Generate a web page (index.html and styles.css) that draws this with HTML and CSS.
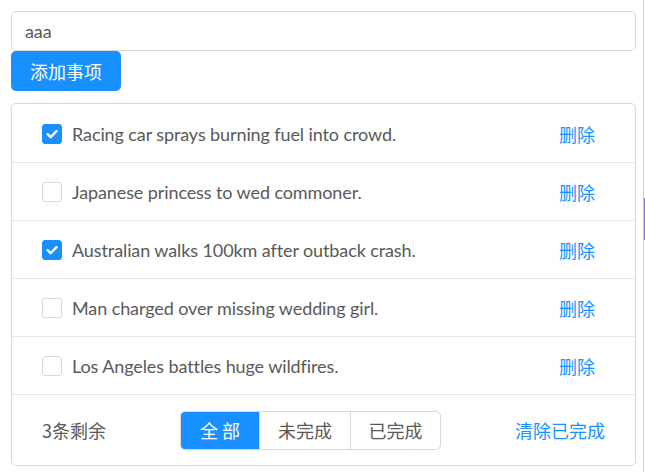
FILE: index.html
```html
<!DOCTYPE html>
<html lang="zh">
<head>
<meta charset="utf-8">
<title>Todo</title>
<link rel="stylesheet" href="styles.css">
</head>
<body>
<div class="page">
  <main class="app">
    <div class="input-box">aaa</div>
    <button class="add-btn">添加事项</button>
    <ul class="list">
      <li class="item">
        <span class="check checked"><svg viewBox="0 0 20 20" width="20" height="20"><path d="M5.5 10.2 L8.6 13.2 L14.6 7.2" fill="none" stroke="#fff" stroke-width="2.4" stroke-linecap="round" stroke-linejoin="round"/></svg></span>
        <span class="title">Racing car sprays burning fuel into crowd.</span>
        <span class="del">删除</span>
      </li>
      <li class="item">
        <span class="check"></span>
        <span class="title">Japanese princess to wed commoner.</span>
        <span class="del">删除</span>
      </li>
      <li class="item">
        <span class="check checked"><svg viewBox="0 0 20 20" width="20" height="20"><path d="M5.5 10.2 L8.6 13.2 L14.6 7.2" fill="none" stroke="#fff" stroke-width="2.4" stroke-linecap="round" stroke-linejoin="round"/></svg></span>
        <span class="title">Australian walks 100km after outback crash.</span>
        <span class="del">删除</span>
      </li>
      <li class="item">
        <span class="check"></span>
        <span class="title">Man charged over missing wedding girl.</span>
        <span class="del">删除</span>
      </li>
      <li class="item">
        <span class="check"></span>
        <span class="title">Los Angeles battles huge wildfires.</span>
        <span class="del">删除</span>
      </li>
      <li class="footer">
        <span class="count">3条剩余</span>
        <div class="seg">
          <span class="seg-btn seg-all active">全 部</span>
          <span class="seg-btn seg-mid">未完成</span>
          <span class="seg-btn seg-last">已完成</span>
        </div>
        <span class="clear">清除已完成</span>
      </li>
    </ul>
  </main>
  <div class="edge"><span class="edge-mark"></span></div>
</div>
</body>
</html>
```
FILE: styles.css
```css
* { box-sizing: border-box; }
html, body { margin: 0; padding: 0; background: #fff; }
body {
  font-family: Lato, "Noto Sans CJK SC", sans-serif;
  font-size: 18px;
  color: #595959;
}
.page {
  display: flex;
  width: 645px;
  height: 472px;
  overflow: hidden;
}
.app {
  width: 643px;
  padding: 11px 7px 0 11px;
}
.input-box {
  height: 40px;
  border: 1px solid #d9d9d9;
  border-radius: 5px;
  padding: 0 13px;
  display: flex;
  align-items: center;
  color: #595959;
  letter-spacing: -0.1px;
}
.add-btn {
  display: block;
  height: 40px;
  padding: 0 19px;
  border: 0;
  border-radius: 5px;
  background: #1890ff;
  color: #fff;
  font-family: "Noto Sans CJK SC", sans-serif;
  font-size: 18px;
}
.list {
  list-style: none;
  margin: 12px 0 0;
  padding: 1px 0 0;
  border: 1px solid #d9d9d9;
  border-radius: 5px;
}
.item {
  height: 58px;
  display: flex;
  align-items: center;
  padding: 0 40px 0 30px;
  border-bottom: 1px solid #e8e8e8;
}
.check {
  width: 20px;
  height: 20px;
  border: 1px solid #d9d9d9;
  border-radius: 3px;
  background: #fff;
  flex: none;
  display: flex;
}
.check.checked {
  border-color: #1890ff;
  background: #1890ff;
}
.check svg { margin: -1px; }
.title {
  margin-left: 10px;
  flex: 1;
  letter-spacing: -0.1px;
  white-space: nowrap;
}
.del {
  color: #1890ff;
  font-family: "Noto Sans CJK SC", sans-serif;
}
.footer {
  height: 70px;
  display: flex;
  align-items: center;
  justify-content: space-between;
  padding: 0 30px;
  font-family: "Noto Sans CJK SC", sans-serif;
}
.count { color: #595959; }
.seg {
  display: flex;
  height: 39px;
  border: 1px solid #d9d9d9;
  border-radius: 5px;
  overflow: hidden;
}
.seg-btn {
  display: flex;
  align-items: center;
  justify-content: center;
  color: #595959;
}
.seg-all { width: 78px; }
.seg-mid { width: 91px; }
.seg-last { width: 90px; }
.seg-btn + .seg-btn { border-left: 1px solid #d9d9d9; }
.seg-btn.active {
  background: #1890ff;
  color: #fff;
}
.clear { color: #1890ff; }
.edge {
  width: 2px;
  border-left: 1px solid #cfcfcf;
  position: relative;
}
.edge-mark {
  position: absolute;
  left: 0;
  top: 198px;
  width: 1px;
  height: 42px;
  background: #8f6bd1;
}
```
